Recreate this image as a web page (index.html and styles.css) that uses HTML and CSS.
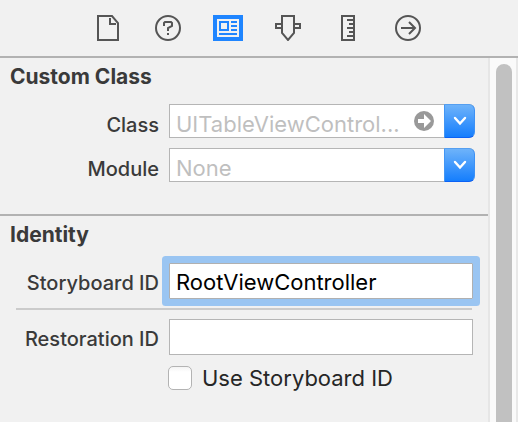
FILE: index.html
```html
<!DOCTYPE html>
<html lang="en">
<head>
<meta charset="utf-8">
<title>Identity Inspector</title>
<link rel="stylesheet" href="styles.css">
</head>
<body>
<div class="inspector">
  <nav class="toolbar" aria-label="Inspectors">
    <button class="tab" type="button" aria-label="File inspector">
      <svg width="22" height="26" viewBox="0 0 22 26" fill="none" stroke="currentColor" stroke-width="2"><path d="M1 1h14l6 7v17H1zM13 3v6h6"/></svg>
    </button>
    <button class="tab" type="button" aria-label="Quick help">
      <svg width="26" height="26" viewBox="0 0 26 26" fill="none" stroke="currentColor" stroke-width="2"><circle cx="13" cy="13" r="12"/><path d="M9 11V8l1-1h6l1 1v3l-4 2v3M13 18v2"/></svg>
    </button>
    <button class="tab tab-active" type="button" aria-label="Identity inspector">
      <svg width="30" height="26" viewBox="0 0 30 26"><path fill="currentColor" d="M0 0h30v26H0z"/><path fill="#f1f1f1" d="M4 4h22v18H4z"/><path fill="currentColor" d="M6 6h10v10H6zM18 6h6v2h-6zM18 10h6v2h-6zM18 14h6v2h-6zM6 18h18v2H6z"/><path fill="#f1f1f1" d="M8 8h6v6H8z"/></svg>
    </button>
    <button class="tab" type="button" aria-label="Attributes inspector">
      <svg width="26" height="26" viewBox="0 0 26 26" fill="none" stroke="currentColor" stroke-width="2"><path d="M7 1h12v17l-6 7-6-7zM7 9H1v4h6M19 9h6v4h-6"/></svg>
    </button>
    <button class="tab" type="button" aria-label="Size inspector">
      <svg width="14" height="26" viewBox="0 0 14 26" fill="none" stroke="currentColor" stroke-width="2"><path d="M1 1h12v24H1zM6 5h6M8 9h4M6 13h6M8 17h4M6 21h6"/></svg>
    </button>
    <button class="tab" type="button" aria-label="Connections inspector">
      <svg width="26" height="26" viewBox="0 0 26 26" fill="none" stroke="currentColor" stroke-width="2"><circle cx="13" cy="13" r="12"/><path d="M6 13h13M14 7l6 6-6 6"/></svg>
    </button>
  </nav>
  <div class="content">
    <form class="panel">
      <section class="section">
        <h2 class="title">Custom Class</h2>
        <div class="row">
          <label class="label" for="class">Class</label>
          <div class="combo">
            <input class="combo-input" id="class" type="text" placeholder="UITableViewControl...">
            <button class="jump" type="button" aria-label="Go to class">
              <svg width="20" height="20" viewBox="0 0 20 20"><circle cx="10" cy="10" r="10" fill="#999"/><path fill="#fff" d="M4 8h6V3l7 7-7 7v-5H4z"/></svg>
            </button>
            <button class="drop" type="button" aria-label="Show classes">
              <svg width="14" height="10" viewBox="0 0 14 10" fill="none" stroke="#fff" stroke-width="2.4" stroke-linecap="round"><path d="M2 2l5 5.500 5-5.500"/></svg>
            </button>
          </div>
        </div>
        <div class="row">
          <label class="label" for="module">Module</label>
          <div class="combo">
            <input class="combo-input" id="module" type="text" placeholder="None">
            <button class="drop" type="button" aria-label="Show modules">
              <svg width="14" height="10" viewBox="0 0 14 10" fill="none" stroke="#fff" stroke-width="2.4" stroke-linecap="round"><path d="M2 2l5 5.500 5-5.500"/></svg>
            </button>
          </div>
        </div>
      </section>
      <section class="section section-identity">
        <h2 class="title">Identity</h2>
        <div class="row">
          <label class="label" for="storyboard">Storyboard ID</label>
          <input class="field field-focused" id="storyboard" type="text" value="RootViewController">
        </div>
        <hr class="rule">
        <div class="row">
          <label class="label" for="restoration">Restoration ID</label>
          <input class="field" id="restoration" type="text">
        </div>
        <div class="row check-row">
          <input class="check" id="use-id" type="checkbox">
          <label class="check-label" for="use-id">Use Storyboard ID</label>
        </div>
      </section>
    </form>
    <div class="scrollbar"><div class="thumb"></div></div>
  </div>
</div>
</body>
</html>
```
FILE: styles.css
```css
* {
  box-sizing: border-box;
}

body {
  margin: 0;
  background: #f1f1f1;
  color: #3a3a3a;
  font-family: Inter, Roboto, "Liberation Sans", sans-serif;
  font-size: 20px;
}

button,
input {
  margin: 0;
  padding: 0;
  border: 0;
  font: inherit;
}

button {
  display: flex;
  align-items: center;
  justify-content: center;
  background: none;
}

.inspector {
  display: flex;
  flex-direction: column;
  min-height: 100vh;
}

.toolbar {
  display: flex;
  justify-content: center;
  padding-right: 2px;
  border-bottom: 2px solid #b2b2b2;
}

.tab {
  width: 60px;
  height: 56px;
  color: #555;
}

.tab-active {
  color: #1f85ff;
}

.content {
  display: flex;
  flex: 1;
}

.panel {
  flex: 1;
  min-width: 0;
}

.section {
  display: flex;
  flex-direction: column;
  gap: 10px;
  padding: 6px 13px 32px 10px;
}

.section-identity {
  padding-right: 15px;
  padding-bottom: 0;
  border-top: 2px solid #b2b2b2;
}

.title {
  margin: 0 0 4px;
  font-size: 21px;
  font-weight: 700;
  line-height: 26px;
}

.section-identity .title {
  margin-bottom: 5px;
}

.row {
  display: flex;
  align-items: center;
}

.label {
  flex: none;
  width: 149px;
  margin-right: 10px;
  padding-top: 8px;
  font-weight: 500;
  line-height: 26px;
  text-align: right;
}

.combo {
  display: flex;
  flex: 1;
  min-width: 0;
  height: 34px;
  border: 1px solid #b5b5b5;
  border-right: 0;
  border-radius: 0 6px 6px 0;
  background: #fff;
}

.combo-input {
  flex: 1;
  min-width: 0;
  padding: 5px 0 0 6px;
  background: none;
  color: #000;
  font-size: 22px;
}

.combo-input::placeholder {
  color: #bfbfbf;
  opacity: 1;
}

.jump {
  width: 30px;
  padding-right: 10px;
}

.jump svg {
  flex: none;
}

.drop {
  width: 31px;
  margin: -1px 0;
  border: 1px solid #3a8ff0;
  border-color: #559ff0 #3d91f5 #0c62f5 #4296f5;
  border-radius: 0 6px 6px 0;
  background: linear-gradient(#6eb3fa, #157efd);
}

.field {
  flex: 1;
  min-width: 0;
  height: 36px;
  padding: 2px 6px 0;
  border: 1px solid #b5b5b5;
  background: #fff;
  color: #000;
  font-size: 22px;
}

.field-focused {
  border-color: #b0b0b0;
  border-radius: 1px;
  box-shadow: 0 0 0 7px #9ac5f2;
}

.section-identity .label {
  padding-top: 3px;
}

.rule {
  width: auto;
  height: 2px;
  margin: -1px 1px -1px 6px;
  border: 0;
  background: #cbcbcb;
}

.check-row {
  gap: 10px;
  padding-left: 158px;
}

.check {
  appearance: none;
  width: 24px;
  height: 24px;
  border: 1px solid #b3b3b3;
  border-radius: 5px;
  background: linear-gradient(#f4f4f4, #fff 5px);
}

.check-label {
  color: #262626;
  font-size: 22px;
  line-height: 26px;
}

.scrollbar {
  flex: none;
  width: 30px;
  padding: 6px 4px 0 6px;
  border-right: 2px solid #e8e8e8;
  border-left: 2px solid #e6e6e6;
  background: #fafafa;
}

.thumb {
  width: 16px;
  height: 100%;
  border-radius: 8px 8px 0 0;
  background: #c1c1c1;
}
```
